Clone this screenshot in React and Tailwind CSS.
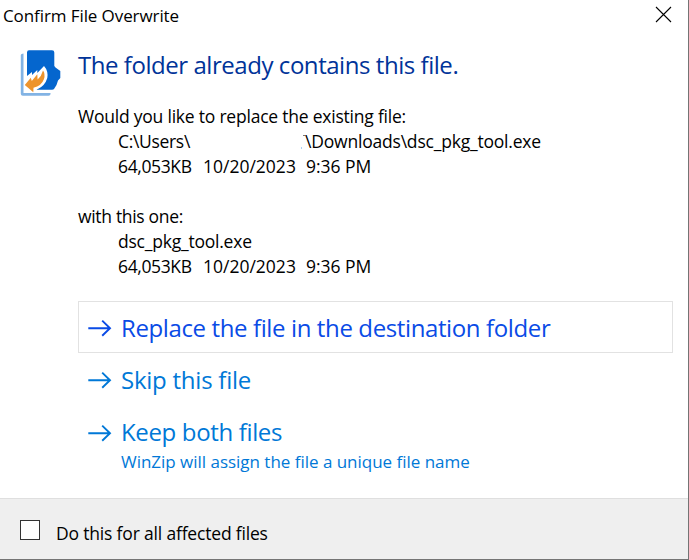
function Arrow() {
  return (
    <svg className="h-[18px] w-[24px] shrink-0" viewBox="0 0 24 18" fill="none" stroke="currentColor" strokeWidth="1.9">
      <path d="M0.3 9.2H22.5M14.2 1.6L22 9.2L14.2 16.8" />
    </svg>
  );
}

function FileIcon() {
  return (
    <svg className="mt-[49px] h-[48px] w-[42px] shrink-0" viewBox="0 0 42 48">
      <path d="M0.8 6Q0.8 4.5 3.5 4.5V44H30.5V45Q30.5 46.7 28.5 46.7H2.8Q0.8 46.7 0.8 44.7Z" fill="#82b3e4" />
      <path d="M7 3.5Q7 1.3 9 1.3H32Q34.3 1.3 34.3 3.5V17L35.5 18.5L40.3 22V29L38 31.5L36.5 36L34 40Q33.5 40.7 32 40.7H17L7 34Z" fill="#0566ce" />
      <path d="M7 27L12 23V26L17.3 21V24L24 17Q28.5 22 27.3 29Q25 37 17 40.5L13 44H7Z" fill="white" />
      <path d="M4.8 36L10.8 28.8L11.8 32L17.3 25.2L17.6 30.5Q21.6 27 23 21.5Q25.5 25 24 30Q21.5 37 13.5 38.8L13.3 43.3Z" fill="#ed942d" />
    </svg>
  );
}

function Details() {
  return (
    <p className="flex pl-[40px]">
      <span className="w-[85px] tracking-[-0.37px]">64,053KB</span>
      <span className="w-[103px] tracking-[0px]">10/20/2023</span>
      <span className="tracking-[-0.05px]">9:36 PM</span>
    </p>
  );
}

export default function App() {
  return (
    <div className="flex h-[560px] w-[689px] flex-col overflow-hidden whitespace-nowrap border-r border-b border-[#747474] bg-white font-['Open_Sans','Noto_Sans',sans-serif] text-[17.5px] text-black">
      <header className="flex h-0 justify-between">
        <h1 className="pt-[4px] pl-[3px] text-[17px] leading-[24px] tracking-[-0.09px]">Confirm File Overwrite</h1>
        <button aria-label="Close" className="mt-[6px] mr-[16px] h-[17px] w-[17px]">
          <svg className="h-[17px] w-[17px]" viewBox="0 0 17 17" stroke="black" strokeWidth="1.1">
            <path d="M1 1L16 16M16 1L1 16" />
          </svg>
        </button>
      </header>
      <main className="flex h-[498px] shrink-0 pl-[20px]">
        <FileIcon />
        <div className="ml-[16px] w-[595px] pt-[49px]">
          <h2 className="text-[24px] leading-[32px] tracking-[-0.45px] text-[#003399]">The folder already contains this file.</h2>
          <div className="pt-[23px] leading-[25px] tracking-[-0.22px]">
            <p>Would you like to replace the existing file:</p>
            <p className="flex pl-[40px]">
              <span className="w-[182px] tracking-[-0.32px]">C:\Users\</span>
              <span className="relative ml-[5px] tracking-[-0.2px]">
                <span className="absolute top-[18px] -left-[4px] h-[2px] w-px bg-[#a8cff5]" />
                <span className="absolute top-[6px] -left-[2px] h-px w-[2px] bg-[#777]" />
                \Downloads\dsc_pkg_tool.exe
              </span>
            </p>
            <Details />
            <p className="pt-[25px] tracking-[-0.32px]">with this one:</p>
            <p className="pl-[40px] tracking-[-0.22px]">dsc_pkg_tool.exe</p>
            <Details />
          </div>
          <div className="mt-[22px] text-[24px]">
            <button className="flex h-[52px] w-full items-center border border-[#e2e2e2] pl-[9px] text-[#0a4be6]">
              <span className="pt-[2px]"><Arrow /></span>
              <span className="ml-[9px] pt-px leading-[32px] tracking-[-0.38px]">Replace the file in the destination folder</span>
            </button>
            <button className="flex h-[52px] w-full items-center pt-[2px] pl-[10px] text-[#0078d7]">
              <Arrow />
              <span className="mt-[-1px] ml-[9px] leading-[32px] tracking-[-0.24px]">Skip this file</span>
            </button>
            <button className="flex w-full items-start pt-[11px] pl-[10px] text-left text-[#0078d7]">
              <span className="pt-[8px]"><Arrow /></span>
              <span className="ml-[9px]">
                <span className="block leading-[32px] tracking-[-0.35px]">Keep both files</span>
                <span className="block pt-[2px] text-[17px] leading-[24px] tracking-[-0.02px]">WinZip will assign the file a unique file name</span>
              </span>
            </button>
          </div>
        </div>
      </main>
      <footer className="flex flex-1 items-start border-t border-[#dfdfdf] bg-[#efefef] pl-[20px]">
        <label className="flex">
          <input type="checkbox" className="mt-[21px] h-[20px] w-[20px] appearance-none border border-[#333] bg-white" />
          <span className="mt-[22px] ml-[16px] leading-[25px] tracking-[-0.18px]">Do this for all affected files</span>
        </label>
      </footer>
    </div>
  );
}
